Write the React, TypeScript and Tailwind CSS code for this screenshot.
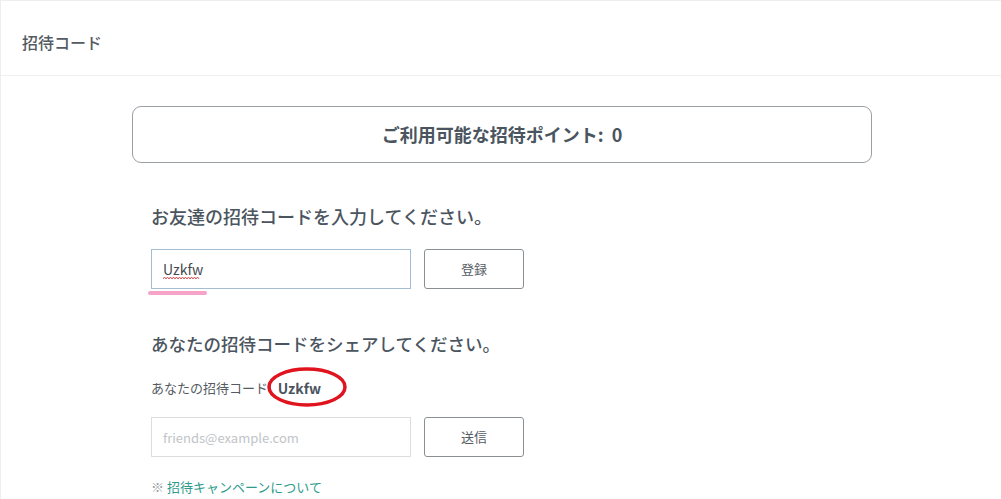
const font = { fontFamily: '"Noto Sans CJK JP", "Noto Sans", sans-serif' };

function Squiggle() {
  let d = "M0 2";
  for (let x = 0; x < 36; x += 3) d += ` l1.5 -2 l1.5 2`;
  return (
    <svg className="absolute left-[12px] top-[28px]" width="37" height="4" viewBox="0 0 37 4">
      <path d={d} fill="none" stroke="#d0454c" strokeWidth="0.9" />
    </svg>
  );
}

export default function App() {
  return (
    <div
      className="w-[1001px] h-[499px] overflow-hidden bg-white text-[#4b5560] border-t border-l border-[#eeeeee]"
      style={font}
    >
      <header className="h-[75px] flex items-center pt-[8px] px-[21px] border-b border-[#f0f0f0]">
        <h1 className="text-[16px] font-medium text-[#555b62]">招待コード</h1>
      </header>

      <main className="w-[740px] ml-[131px] pt-[30px]">
        <div className="h-[57px] flex items-center justify-center border border-[#9a9fa4] rounded-[9px]">
          <p className="text-[18px] font-bold text-[#4b5560]">
            ご利用可能な招待ポイント:&nbsp;&nbsp;0
          </p>
        </div>

        <section className="pl-[19px] pt-[40px]">
          <h2 className="text-[18px] font-medium leading-[26px]">
            お友達の招待コードを入力してください。
          </h2>
          <div className="flex gap-[13px] mt-[20px] relative">
            <div className="relative">
              <input
                defaultValue="Uzkfw"
                className="w-[260px] h-[40px] px-[11px] border border-[#a4bdd3] text-[14px] font-normal text-[#444a50] outline-none"
              />
              <Squiggle />
            </div>
            <button className="w-[100px] h-[40px] border border-[#8a8f94] rounded-[3px] text-[13px] text-[#555b62] bg-white">
              登録
            </button>
            <div className="absolute left-[-3px] top-[42px] w-[59px] h-[4px] rounded-full bg-[#f5a3c7]" />
          </div>
        </section>

        <section className="pl-[19px] pt-[42px]">
          <h2 className="text-[17.5px] font-medium leading-[26px]">
            あなたの招待コードをシェアしてください。
          </h2>
          <div className="relative mt-[19px] flex items-center h-[24px]">
            <span className="text-[13px] text-[#555b62]">あなたの招待コード:</span>
            <span className="ml-[6px] text-[14px] font-bold text-[#4b5560]">Uzkfw</span>
            <svg
              className="absolute left-[116px] top-[-11px]"
              width="82"
              height="44"
              viewBox="0 0 82 44"
            >
              <ellipse
                cx="40"
                cy="22"
                rx="38"
                ry="18"
                fill="none"
                stroke="#e0141e"
                strokeWidth="3.5"
              />
            </svg>
          </div>
          <div className="flex gap-[13px] mt-[17px]">
            <input
              placeholder="friends@example.com"
              className="w-[260px] h-[40px] px-[11px] border border-[#dddddd] text-[13px] outline-none placeholder:text-[#c0c4c8]"
            />
            <button className="w-[100px] h-[40px] border border-[#8a8f94] rounded-[3px] text-[13px] text-[#555b62] bg-white">
              送信
            </button>
          </div>
          <p className="mt-[20px] text-[13px]">
            <span className="text-[#9aa0a5]">※ </span>
            <a className="text-[#2e9c8c]">招待キャンペーンについて</a>
          </p>
        </section>
      </main>
    </div>
  );
}
